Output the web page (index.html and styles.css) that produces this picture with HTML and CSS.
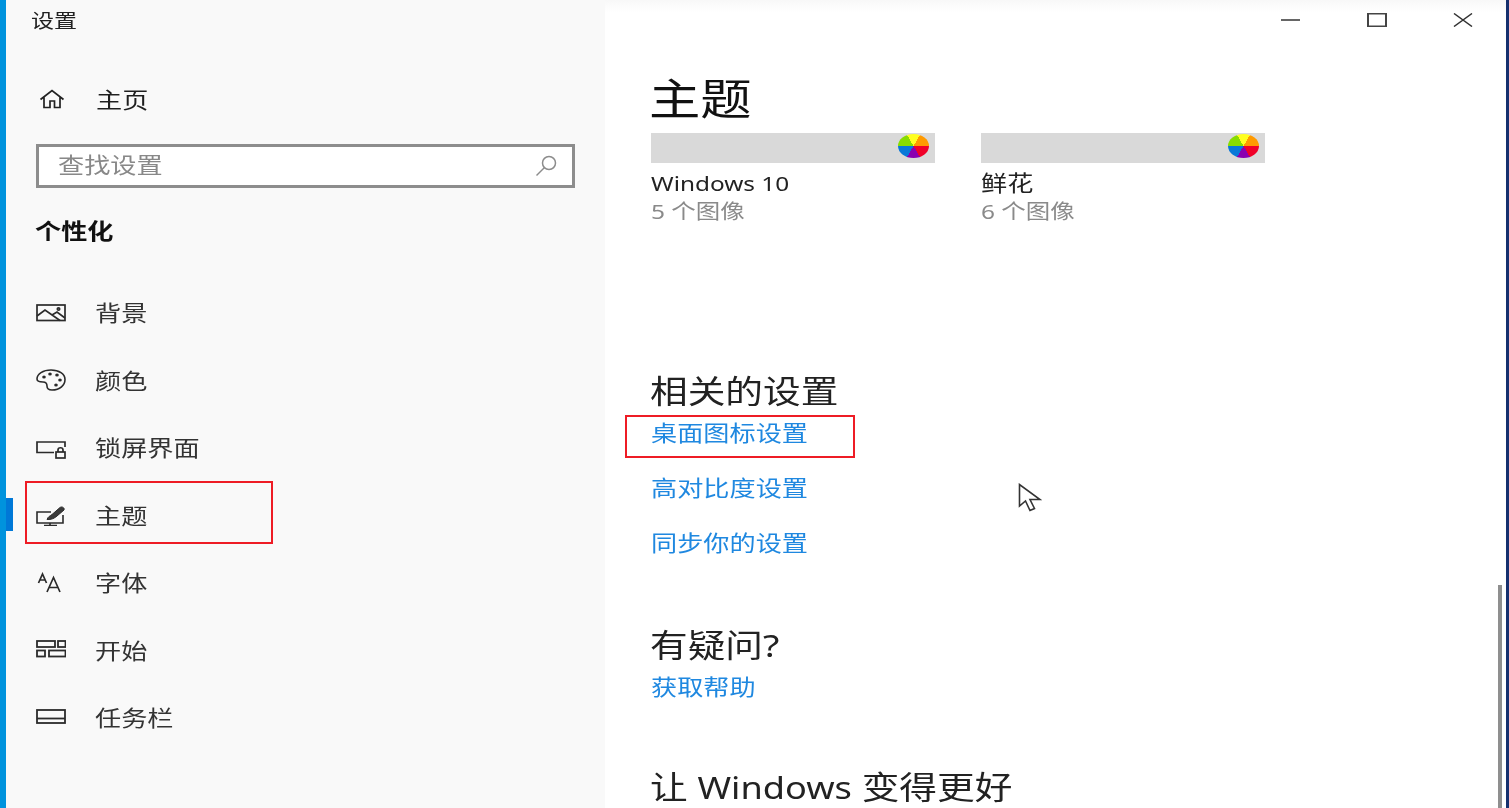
FILE: index.html
```html
<!DOCTYPE html>
<html lang="zh-CN">
<head>
<meta charset="utf-8">
<title>设置</title>
<link rel="stylesheet" href="styles.css">
</head>
<body>
<div class="window">
  <div class="accent"></div>
  <aside class="sidebar">
    <div class="app-title"><span class="t">设置</span></div>
    <div class="home-row">
      <svg class="icon-home" viewBox="0 0 26 20" fill="none" stroke="#222" stroke-width="1.700"><path d="M1.500 10.500 13 1.500l11.500 9M5 8v10.500h6v-6.500h4.500v6.500h5.500V8"/></svg>
      <span class="t">主页</span>
    </div>
    <div class="search">
      <span class="t">查找设置</span>
      <svg class="icon-search" viewBox="0 0 22 22" fill="none" stroke="#8c8c8c" stroke-width="1.500"><ellipse cx="14" cy="8" rx="6.500" ry="6.500"/><path d="M9.500 12.500 1.500 20.500"/></svg>
    </div>
    <h2 class="section"><span class="t">个性化</span></h2>
    <nav class="nav">
      <div class="nav-row">
        <svg class="nav-icon" viewBox="0 0 30 22" fill="none" stroke="#2b2b2b" stroke-width="1.700"><rect x="1" y="3" width="28" height="15.500"/><path d="M1 14 9 8l15 10.500M16 13l5-3 8 6"/><circle cx="22.500" cy="7" r="1.200"/></svg>
        <span class="t">背景</span>
      </div>
      <div class="nav-row">
        <svg class="nav-icon" viewBox="0 0 30 22" fill="none" stroke="#2b2b2b" stroke-width="1.600"><path d="M15 1C7 1 1 5 1 10c0 3 3 3 6 3 3 0 4 1.500 4 4 0 2.500 2 4 5 4 8 0 13-5 13-10.500C29 5 23 1 15 1Z"/><g fill="#2b2b2b" stroke="none"><ellipse cx="8" cy="8" rx="1.800" ry="1.500"/><ellipse cx="14" cy="5" rx="1.800" ry="1.500"/><ellipse cx="21" cy="6" rx="1.800" ry="1.500"/><ellipse cx="24" cy="11" rx="1.800" ry="1.500"/><ellipse cx="20" cy="16" rx="1.800" ry="1.500"/></g></svg>
        <span class="t">颜色</span>
      </div>
      <div class="nav-row">
        <svg class="nav-icon" viewBox="0 0 30 22" fill="none" stroke="#2b2b2b" stroke-width="1.700"><path d="M18 15.500H1V5h28v5"/><rect x="20" y="15" width="9" height="6"/><path d="M22 15v-2c0-3 5-3 5 0v2"/></svg>
        <span class="t">锁屏界面</span>
      </div>
      <div class="nav-row">
        <svg class="nav-icon" viewBox="0 0 30 22" fill="none" stroke="#2b2b2b" stroke-width="1.600"><path d="M15 8H1v11h26v-8M14 19v2.500M8 21.500h13"/><path d="M11 15.500c1-3 3-3.500 5-5l8-7c2-1.500 5 .5 4 2.500l-7 6c-2 2-6 4-10 3.500Z" fill="#3a3a3a" stroke-width="1"/></svg>
        <span class="t">主题</span>
      </div>
      <div class="nav-row">
        <svg class="nav-icon" viewBox="0 0 30 22" fill="none" stroke="#2b2b2b" stroke-width="1.700"><path d="M2.500 11 6.500 2l4 9M4 8h5"/><path d="M11 20 17.500 5.500 24 20M13.500 15.500h8"/></svg>
        <span class="t">字体</span>
      </div>
      <div class="nav-row">
        <svg class="nav-icon" viewBox="0 0 30 22" fill="none" stroke="#2b2b2b" stroke-width="1.800"><rect x="1" y="2" width="18" height="6"/><rect x="22" y="2" width="7.500" height="6"/><rect x="1" y="11.500" width="8" height="6"/><rect x="13" y="11.500" width="16.500" height="6"/></svg>
        <span class="t">开始</span>
      </div>
      <div class="nav-row">
        <svg class="nav-icon" viewBox="0 0 30 22" fill="none" stroke="#2b2b2b" stroke-width="1.800"><rect x="1" y="3" width="28" height="13"/><path d="M1 11.500h28"/></svg>
        <span class="t">任务栏</span>
      </div>
    </nav>
    <div class="active-bar"></div>
  </aside>
  <main class="content">
    <div class="controls">
      <svg class="ctl ctl-min" viewBox="0 0 20 14" fill="none" stroke="#333" stroke-width="1.500"><path d="M0 7h19"/></svg>
      <svg class="ctl ctl-max" viewBox="0 0 20 14" fill="none" stroke="#444" stroke-width="2"><rect x="1" y="0.500" width="18" height="13"/></svg>
      <svg class="ctl ctl-close" viewBox="0 0 20 14" fill="none" stroke="#333" stroke-width="1.500"><path d="M1 0.500 19 13.500M19 0.500 1 13.500"/></svg>
    </div>
    <h1 class="title"><span class="t">主题</span></h1>
    <div class="themes">
      <div class="theme">
        <div class="swatch"><span class="wheel"></span></div>
        <div class="theme-name"><span class="t"><span class="latin">Windows 10</span></span></div>
        <div class="theme-count"><span class="t">5 个图像</span></div>
      </div>
      <div class="theme">
        <div class="swatch"><span class="wheel"></span></div>
        <div class="theme-name"><span class="t">鲜花</span></div>
        <div class="theme-count"><span class="t">6 个图像</span></div>
      </div>
    </div>
    <h2 class="heading related"><span class="t">相关的设置</span></h2>
    <a class="link first"><span class="t">桌面图标设置</span></a>
    <a class="link"><span class="t">高对比度设置</span></a>
    <a class="link"><span class="t">同步你的设置</span></a>
    <h2 class="heading question"><span class="t">有疑问?</span></h2>
    <a class="link first"><span class="t">获取帮助</span></a>
    <h2 class="heading better"><span class="t">让 <span class="latin">Windows</span> 变得更好</span></h2>
    <div class="scrollbar"></div>
  </main>
  <div class="edge"></div>
  <div class="mark mark-nav"></div>
  <div class="mark mark-link"></div>
  <svg class="cursor" viewBox="0 0 24 29" fill="#fff" stroke="#333" stroke-width="1.600"><path d="M1.500 1.500V23l6-5 4.500 9.500 4.500-2-4.500-9H22Z"/></svg>
</div>
</body>
</html>
```
FILE: styles.css
```css
* { box-sizing: border-box; }
html, body { margin: 0; padding: 0; background: #fff; }
body {
  font-family: "Noto Sans", "Noto Sans CJK SC", sans-serif;
  color: #1f1f1f;
  overflow: hidden;
}
h1, h2 { margin: 0; font-weight: 400; }
.t {
  display: inline-block;
  white-space: nowrap;
  transform: scaleX(1.2);
  transform-origin: left center;
}
.latin { font-size: 0.96em; }
.window {
  position: relative;
  display: flex;
  width: 1509px;
  height: 808px;
  overflow: hidden;
  filter: blur(0.6px);
}
.accent {
  flex: none;
  width: 6px;
  background: #0093dd;
}
.sidebar {
  position: relative;
  flex: none;
  width: 599px;
  padding-left: 26px;
  background: #f9f9f9;
}
.app-title {
  height: 42px;
  padding-top: 6px;
  margin-left: -1px;
  font-size: 19.200px;
  line-height: 30px;
  color: #222;
}
.home-row {
  display: flex;
  align-items: center;
  height: 40px;
  margin: 37px 0 0 7px;
  font-size: 21.800px;
  line-height: 30px;
}
.home-row .t { margin-top: 2px; }
.icon-home { width: 26px; height: 20px; margin-right: 31px; }
.search {
  display: flex;
  align-items: center;
  justify-content: space-between;
  width: 539px;
  height: 44px;
  margin: 25px 0 0 4px;
  padding: 0 15px 0 19px;
  border: 3px solid #8d8d8d;
  background: #fff;
  font-size: 21.800px;
  color: #888;
}
.search .t { margin-top: -6px; }
.icon-search { width: 22px; height: 22px; }
.section {
  height: 40px;
  margin: 23px 0 0 3px;
  font-size: 21.800px;
  font-weight: 700;
  line-height: 40px;
  color: #111;
}
.nav {
  margin-top: 28px;
  font-size: 21.800px;
  color: #333;
}
.nav-row {
  display: flex;
  align-items: center;
  height: 67.500px;
  padding-left: 4px;
}
.nav-row .t { margin-top: -2px; }
.nav-icon { width: 30px; height: 22px; margin-right: 29px; }
.active-bar {
  position: absolute;
  left: 0;
  top: 498px;
  width: 7px;
  height: 33px;
  background: #0078d7;
}
.content {
  position: relative;
  flex: 1;
  padding: 74px 0 0 46px;
  background: linear-gradient(#f8f8f8 0, #fff 12px);
}
.controls {
  position: absolute;
  inset: 0 0 auto 0;
  display: flex;
  padding: 13px 0 0 676px;
}
.ctl { width: 20px; height: 14px; flex: none; margin-right: 66px; }
.title {
  height: 50px;
  margin-left: -2px;
  font-size: 42.800px;
  line-height: 50px;
  color: #111;
}
.themes {
  display: flex;
  gap: 46px;
  margin-top: 9px;
}
.theme { width: 284px; }
.swatch {
  display: flex;
  align-items: center;
  justify-content: flex-end;
  height: 30px;
  padding: 0 6px 4px 0;
  background: #d9d9d9;
}
.wheel {
  width: 31px;
  height: 24px;
  border-radius: 50%;
  background: conic-gradient(#ffff20 0 30deg, #ff9a00 30deg 90deg, #f00028 90deg 150deg, #8a00b0 150deg 210deg, #0878d8 210deg 270deg, #88dc00 270deg 330deg, #ffff20 330deg);
}
.theme-name {
  height: 28px;
  margin-top: 6px;
  font-size: 21.800px;
  line-height: 28px;
  color: #222;
}
.theme-name .latin { font-size: 20.300px; }
.theme-count {
  height: 28px;
  font-size: 20.400px;
  line-height: 28px;
  color: #8a8a8a;
}
.heading {
  height: 40px;
  margin-left: -1px;
  font-size: 31.400px;
  line-height: 40px;
  color: #222;
}
.related { margin-top: 146px; }
.question { margin-top: 68px; }
.better { margin-top: 66px; }
.link {
  display: block;
  height: 28px;
  margin-top: 27px;
  font-size: 21.800px;
  line-height: 28px;
  color: #1f88e0;
}
.link.first { margin-top: 8px; }
.scrollbar {
  position: absolute;
  right: 4px;
  top: 585px;
  bottom: 0;
  width: 4px;
  background: #8f8f8f;
}
.edge {
  flex: none;
  width: 3px;
  background: #16306e;
}
.mark {
  position: absolute;
  border: 2px solid #ee1c25;
}
.mark-nav { left: 25px; top: 481px; width: 248px; height: 63px; }
.mark-link { left: 625px; top: 415px; width: 230px; height: 43px; }
.cursor {
  position: absolute;
  left: 1018px;
  top: 483px;
  width: 24px;
  height: 29px;
}
```
